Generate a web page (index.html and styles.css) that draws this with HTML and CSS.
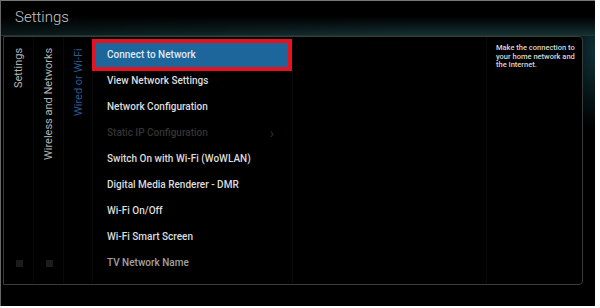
FILE: index.html
```html
<!DOCTYPE html>
<html lang="en">
<head>
  <meta charset="UTF-8" />
  <title>Settings</title>
  <link rel="stylesheet" href="styles.css">
</head>
<body>

<div class="screen">
  <header class="topbar">
    <div class="title">Settings</div>
  </header>

  <div class="panel">
    <div class="crumb">
      <span class="crumb-text">Settings</span>
      <span class="dot"></span>
    </div>
    <div class="crumb">
      <span class="crumb-text">Wireless and Networks</span>
      <span class="dot"></span>
    </div>
    <div class="crumb current">
      <span class="crumb-text">Wired or Wi-Fi</span>
    </div>

    <ul class="menu">
      <li class="item active">Connect to Network</li>
      <li class="item">View Network Settings</li>
      <li class="item">Network Configuration</li>
      <li class="item disabled">Static IP Configuration <span class="chev">&#8250;</span></li>
      <li class="item">Switch On with Wi-Fi (WoWLAN)</li>
      <li class="item">Digital Media Renderer - DMR</li>
      <li class="item">Wi-Fi On/Off</li>
      <li class="item">Wi-Fi Smart Screen</li>
      <li class="item dim">TV Network Name</li>
    </ul>

    <div class="sub"></div>

    <div class="info">
      Make the connection to your home network and the Internet.
    </div>
  </div>
</div>

</body>
</html>
```

FILE: styles.css
```css
body {
  margin: 0;
  background: #fff;
  font-family: Roboto, "Liberation Sans", sans-serif;
}

.screen {
  width: 595px;
  height: 306px;
  background:
    radial-gradient(ellipse 40px 80px at 595px 50px, rgba(20, 70, 80, 0.7), rgba(0, 0, 0, 0) 100%),
    #000;
  border-top: 1px solid #777;
  border-left: 1px solid #666;
  box-sizing: border-box;
  display: flex;
  flex-direction: column;
}

.topbar {
  height: 35px;
  box-sizing: border-box;
  padding: 7px 0 0 14px;
  background:
    linear-gradient(to right, rgba(0, 0, 0, 0.5), rgba(0, 0, 0, 0) 70%),
    linear-gradient(to bottom, #000 0%, #000 45%, #0c1d20 80%, #15302f 100%);
  border-bottom: 1px solid #203436;
}

.title {
  font-size: 15px;
  font-weight: 300;
  color: #c8c8c8;
}

.panel {
  margin-left: 2px;
  width: 580px;
  height: 249px;
  box-sizing: border-box;
  border: 1px solid #3a3a3a;
  border-radius: 0 4px 4px 0;
  background: #000;
  display: grid;
  grid-template-columns: 30px 30px 29px 200px 194px 1fr;
}

.crumb {
  position: relative;
  border-right: 1px solid #080808;
}

.crumb-text {
  display: block;
  height: 200px;
  writing-mode: vertical-rl;
  transform: rotate(180deg);
  text-align: end;
  padding-bottom: 11px;
  margin: 0 auto;
  font-size: 11px;
  color: #b4b4b4;
  white-space: nowrap;
}

.crumb.current .crumb-text {
  color: #2a5b98;
}

.dot {
  position: absolute;
  left: 12px;
  top: 223px;
  width: 7px;
  height: 7px;
  background: #1c1c1c;
}

.menu {
  list-style: none;
  margin: 0;
  padding: 5px 4px 0 3px;
  border-right: 1px solid #0a0a0a;
}

.item {
  height: 26px;
  line-height: 26px;
  padding-left: 11px;
  font-size: 10px;
  font-weight: 500;
  color: #dcdcdc;
  position: relative;
  white-space: nowrap;
}

.item.active {
  height: 24px;
  line-height: 24px;
  margin: 1px 0;
  background: #1c669b;
  outline: 4px solid #e3141f;
  color: #dfe9f3;
}

.item.disabled {
  color: #333;
}

.item.dim {
  color: #a0a0a0;
}

.chev {
  position: absolute;
  right: 14px;
  top: 0;
  font-size: 14px;
  color: #2e2e2e;
}

.sub {
  border-right: 1px solid #0a0a0a;
}

.info {
  padding: 7px 3px 0 9px;
  font-size: 7.5px;
  font-weight: 500;
  line-height: 8.5px;
  color: #d8d8d8;
}
```
